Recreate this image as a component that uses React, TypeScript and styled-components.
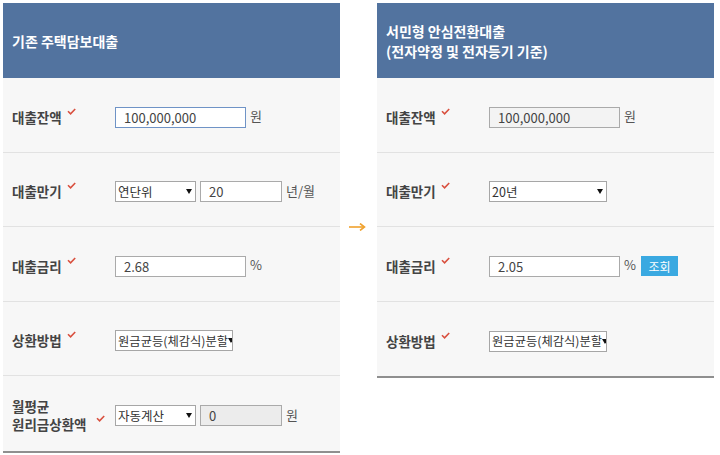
import React from "react";
import styled, { createGlobalStyle } from "styled-components";

const Global = createGlobalStyle`
  html, body { margin: 0; padding: 0; background: #ffffff; }
  body { font-family: "Noto Sans CJK KR", "Noto Sans", sans-serif; }
  * { box-sizing: border-box; }
`;

const Page = styled.div`
  display: flex;
  align-items: flex-start;
  padding: 3px 6px 0 3px;
  width: 720px;
  height: 455px;
`;

const Panel = styled.section`
  width: 337px;
  background: #f7f7f7;
  border-bottom: 2px solid #8f8f8f;
  flex-shrink: 0;
`;

const Header = styled.div`
  height: 75px;
  background: #52739f;
  color: #ffffff;
  display: flex;
  align-items: center;
  padding-left: 9px;
  padding-top: 1px;
  font-size: 14px;
  font-weight: 700;
  line-height: 20px;
`;

const Row = styled.div<{ $last?: boolean }>`
  height: 74.5px;
  display: flex;
  align-items: center;
  padding-left: 9px;
  padding-top: 5px;
  border-bottom: ${(p) => (p.$last ? "none" : "1px solid #e2e2e2")};
`;

const Label = styled.div`
  width: 103px;
  flex-shrink: 0;
  font-size: 13.5px;
  font-weight: 700;
  color: #444444;
  line-height: 17px;
  padding-bottom: 1px;
`;

const CheckMark = styled.svg<{ $gap?: number }>`
  display: inline-block;
  width: 9px;
  height: 7px;
  margin-left: ${(p) => p.$gap ?? 5}px;
  vertical-align: 8px;
`;

const Field = styled.div`
  display: flex;
  align-items: center;
  gap: 4px;
`;

const TextInput = styled.input<{ $w: number; $bg?: string; $focus?: boolean }>`
  width: ${(p) => p.$w}px;
  height: 21px;
  border: 1px solid ${(p) => (p.$focus ? "#6f93c6" : "#aaaaaa")};
  background: ${(p) => p.$bg ?? "#ffffff"};
  padding: 0 0 0 8px;
  font-family: "Noto Sans CJK KR", "Noto Sans", sans-serif;
  font-size: 13px;
  color: #444444;
  outline: none;
  margin: 0;
`;

const SelectBox = styled.div<{ $w: number; $pad?: number; $fs?: number }>`
  width: ${(p) => p.$w}px;
  height: 21px;
  border: 1px solid #a6a6a6;
  background: #ffffff;
  display: flex;
  align-items: center;
  justify-content: space-between;
  padding: 0 ${(p) => p.$pad ?? 3}px 0 2px;
  font-size: ${(p) => p.$fs ?? 12.5}px;
  color: #333333;
  white-space: nowrap;
  overflow: hidden;
`;

const Arrow = styled.svg`
  width: 6px;
  height: 5px;
  flex-shrink: 0;
`;

const Unit = styled.span`
  font-size: 13px;
  color: #555555;
  padding-bottom: 3px;
`;

const Button = styled.button`
  width: 37px;
  height: 20px;
  border: none;
  background: #3aa9e1;
  color: #ffffff;
  font-family: "Noto Sans CJK KR", "Noto Sans", sans-serif;
  font-size: 12px;
  padding: 0;
  margin-left: 1px;
`;

const Between = styled.div`
  width: 37px;
  flex-shrink: 0;
  display: flex;
  justify-content: center;
  padding-top: 220px;
  padding-right: 3px;
`;

const Check = ({ gap }: { gap?: number }) => (
  <CheckMark $gap={gap} viewBox="0 0 9 7">
    <path d="M1 3.2 L3.6 5.8 L8.2 1" fill="none" stroke="#d9503f" strokeWidth="1.6" />
  </CheckMark>
);

const Select = ({ w, text, pad, fs }: { w: number; text: string; pad?: number; fs?: number }) => (
  <SelectBox $w={w} $pad={pad} $fs={fs}>
    <span>{text}</span>
    <Arrow viewBox="0 0 6 5">
      <path d="M0 0 H6 L3 5 Z" fill="#111" />
    </Arrow>
  </SelectBox>
);

export default function App() {
  return (
    <>
      <Global />
      <Page>
        <Panel>
          <Header>기존 주택담보대출</Header>
          <Row>
            <Label>
              대출잔액<Check />
            </Label>
            <Field>
              <TextInput $w={131} $focus readOnly value="100,000,000" />
              <Unit>원</Unit>
            </Field>
          </Row>
          <Row>
            <Label>
              대출만기<Check />
            </Label>
            <Field>
              <Select w={81} text="연단위" />
              <TextInput $w={82} readOnly value="20" />
              <Unit>년/월</Unit>
            </Field>
          </Row>
          <Row>
            <Label>
              대출금리<Check />
            </Label>
            <Field>
              <TextInput $w={131} readOnly value="2.68" />
              <Unit>%</Unit>
            </Field>
          </Row>
          <Row>
            <Label>
              상환방법<Check />
            </Label>
            <Field>
              <Select w={118} text="원금균등(체감식)분할" pad={1} fs={12.3} />
            </Field>
          </Row>
          <Row $last>
            <Label>
              월평균
              <br />
              원리금상환액<Check gap={9} />
            </Label>
            <Field>
              <Select w={81} text="자동계산" />
              <TextInput $w={82} $bg="#ececec" readOnly value="0" />
              <Unit>원</Unit>
            </Field>
          </Row>
        </Panel>

        <Between>
          <svg width="17" height="8" viewBox="0 0 17 8">
            <path d="M0 4 H15" stroke="#f0a22e" strokeWidth="1.6" />
            <path d="M11 0.5 L15.5 4 L11 7.5" fill="none" stroke="#f0a22e" strokeWidth="1.6" />
          </svg>
        </Between>

        <Panel>
          <Header>
            서민형 안심전환대출
            <br />
            (전자약정 및 전자등기 기준)
          </Header>
          <Row>
            <Label>
              대출잔액<Check />
            </Label>
            <Field>
              <TextInput $w={131} $bg="#f3f3f3" readOnly value="100,000,000" />
              <Unit>원</Unit>
            </Field>
          </Row>
          <Row>
            <Label>
              대출만기<Check />
            </Label>
            <Field>
              <Select w={118} text="20년" />
            </Field>
          </Row>
          <Row>
            <Label>
              대출금리<Check />
            </Label>
            <Field>
              <TextInput $w={131} readOnly value="2.05" />
              <Unit>%</Unit>
              <Button>조회</Button>
            </Field>
          </Row>
          <Row $last>
            <Label>
              상환방법<Check />
            </Label>
            <Field>
              <Select w={118} text="원금균등(체감식)분할" pad={1} fs={12.3} />
            </Field>
          </Row>
        </Panel>
      </Page>
    </>
  );
}
